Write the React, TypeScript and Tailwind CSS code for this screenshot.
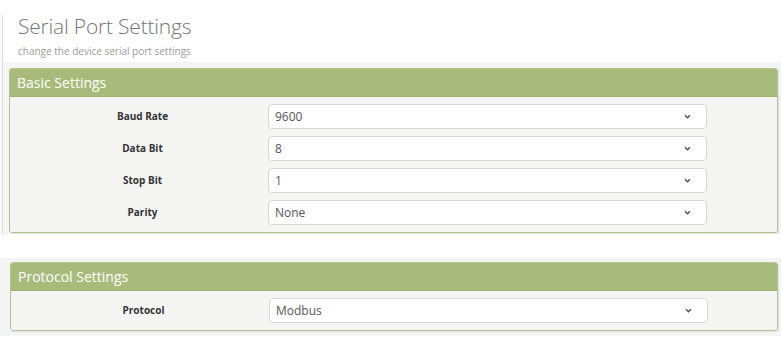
const basicRows = [
  { label: "Baud Rate", value: "9600" },
  { label: "Data Bit", value: "8" },
  { label: "Stop Bit", value: "1" },
  { label: "Parity", value: "None" },
]

const Chevron = () => (
  <svg width="7" height="5" viewBox="0 0 7 5" className="text-[#555]">
    <path d="M1 1.2 L3.5 3.7 L6 1.2" fill="none" stroke="currentColor" strokeWidth="1.5" />
  </svg>
)

const SelectRow = ({ label, value }: { label: string; value: string }) => (
  <div className="flex items-center h-[25px]">
    <div className="w-[258px] pl-[7px] text-center text-[10px] font-bold text-[#333]">{label}</div>
    <div className="w-[439px] h-[25px] flex items-center justify-between bg-white border border-[#d6d6d6] rounded-[4px] pl-[6px] pr-[15px] text-[12px] text-[#555]">
      <span>{value}</span>
      <Chevron />
    </div>
  </div>
)

const Panel = ({ title, children }: { title: string; children: React.ReactNode }) => (
  <div className="border border-[#b3c48e] rounded-[3px] overflow-hidden shadow-[1px_1px_1px_rgba(0,0,0,0.08)]">
    <div className="h-[28px] bg-[#a8bb7b] border-b border-[#9db070] pl-[7px] flex items-center text-[14px] text-white">
      {title}
    </div>
    <div className="bg-[#f4f5f3] py-[7px] flex flex-col gap-[7px]">{children}</div>
  </div>
)

export default function App() {
  return (
    <div className="w-[781px] h-[348px] bg-white overflow-hidden font-['Open_Sans',sans-serif]">
      <div className="flex">
        <div className="w-[3px] mt-[15px] h-[219px] border-r border-[#dcdcdc] bg-[#f9f9f9]" />
        <div className="flex-1">
          <div className="h-[62px] pl-[15px] pt-[12px]">
            <div className="text-[21px] leading-[28px] font-light text-[#767676] tracking-[-0.2px]">Serial Port Settings</div>
            <div className="text-[10px] leading-[14px] mt-[4px] text-[#9a9a9a]">change the device serial port settings</div>
          </div>
          <div className="bg-[#f4f4f4] pt-[6px] pl-[6px] pr-[3px] pb-[1px]">
            <Panel title="Basic Settings">
              {basicRows.map((r) => (
                <SelectRow key={r.label} label={r.label} value={r.value} />
              ))}
            </Panel>
          </div>
        </div>
      </div>
      <div className="h-[24px]" />
      <div className="bg-[#f4f4f4] pt-[4px] pb-[5px] pl-[10px] pr-[3px]">
        <Panel title="Protocol Settings">
          <SelectRow label="Protocol" value="Modbus" />
        </Panel>
      </div>
    </div>
  )
}
